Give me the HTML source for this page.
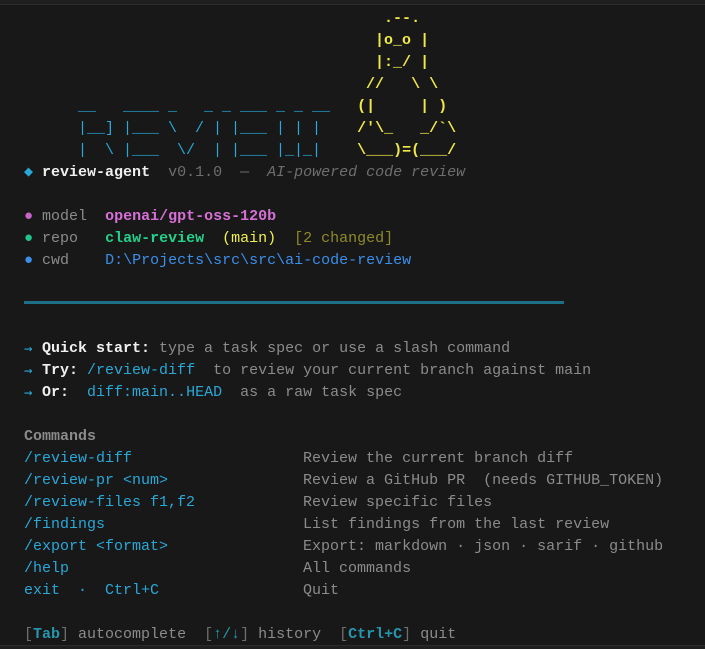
<!DOCTYPE html>
<html><head><meta charset="utf-8"><style>
html,body{margin:0;padding:0;background:#181818;width:705px;height:649px;overflow:hidden}
body{position:relative;font-family:"Liberation Mono","DejaVu Sans Mono",monospace;font-size:15px;color:#cccccc}
.top{position:absolute;left:0;top:0;width:705px;height:4px;background:#1f1f1f;border-bottom:1px solid #2b2b2b}
.bot{position:absolute;left:0;top:645px;width:705px;height:4px;background:#1f1f1f;border-top:1px solid #2b2b2b}
.l{position:absolute;left:24px;height:22px;line-height:22px;white-space:pre}
.y{color:#f0e84a}.c{color:#29a8d8}.g{color:#8b8b8b}.d{color:#6e6e6e}
.b{font-weight:bold}
.a{color:#29a8d8;font-family:"DejaVu Sans Mono",monospace;font-size:14px;display:inline-block;width:9px;line-height:22px;vertical-align:top}
.sep{position:absolute;left:24px;top:301px;width:540px;height:3px;background:#1d6f85}
</style></head><body>
<div class="top"></div>
<div class="l y b" style="top:8px">                                        .--.</div>
<div class="l y b" style="top:30px">                                       |o_o |</div>
<div class="l y b" style="top:52px">                                       |:_/ |</div>
<div class="l y b" style="top:74px">                                      //   \ \</div>
<div class="l" style="top:96px"><span class="c">      __   ____ _   _ _ ___ _ _ __</span><span class="y b">   (|     | )</span></div>
<div class="l" style="top:118px"><span class="c">      |__] |___ \  / | |___ | | |</span><span class="y b">    /'\_   _/`\</span></div>
<div class="l" style="top:140px"><span class="c">      |  \ |___  \/  | |___ |_|_|</span><span class="y b">    \___)=(___/</span></div>
<div class="l" style="top:162px"><span class="c">◆</span> <span class="b" style="color:#f0f0f0">review-agent</span>  <span class="d">v0.1.0  —  <i>AI-powered code review</i></span></div>
<div class="l" style="top:206px"><span style="color:#c864c8">●</span> <span class="g">model</span>  <span class="b" style="color:#d670d6">openai/gpt-oss-120b</span></div>
<div class="l" style="top:228px"><span style="color:#23c48b">●</span> <span class="g">repo</span>   <span class="b" style="color:#23d18b">claw-review</span>  <span style="color:#f0f050">(main)</span>  <span style="color:#8f8a28">[2 changed]</span></div>
<div class="l" style="top:250px"><span style="color:#3b8eea">●</span> <span class="g">cwd</span>    <span style="color:#3b8eea">D:\Projects\src\src\ai-code-review</span></div>
<div class="sep"></div>
<div class="l g" style="top:338px"><span class="a">→</span> <span class="b" style="color:#f0f0f0">Quick start:</span> type a task spec or use a slash command</div>
<div class="l g" style="top:360px"><span class="a">→</span> <span class="b" style="color:#f0f0f0">Try:</span> <span class="c">/review-diff</span>  to review your current branch against main</div>
<div class="l g" style="top:382px"><span class="a">→</span> <span class="b" style="color:#f0f0f0">Or:</span>  <span class="c">diff:main..HEAD</span>  as a raw task spec</div>
<div class="l b g" style="top:426px">Commands</div>
<div class="l g" style="top:448px"><span class="c">/review-diff                   </span>Review the current branch diff</div>
<div class="l g" style="top:470px"><span class="c">/review-pr &lt;num&gt;               </span>Review a GitHub PR  (needs GITHUB_TOKEN)</div>
<div class="l g" style="top:492px"><span class="c">/review-files f1,f2            </span>Review specific files</div>
<div class="l g" style="top:514px"><span class="c">/findings                      </span>List findings from the last review</div>
<div class="l g" style="top:536px"><span class="c">/export &lt;format&gt;               </span>Export: markdown · json · sarif · github</div>
<div class="l g" style="top:558px"><span class="c">/help                          </span>All commands</div>
<div class="l g" style="top:580px"><span class="c">exit  ·  Ctrl+C                </span>Quit</div>
<div class="l g" style="top:624px"><span class="d">[</span><b style="color:#2596ad">Tab</b><span class="d">]</span> autocomplete  <span class="d">[</span><span style="color:#2596ad">↑/↓</span><span class="d">]</span> history  <span class="d">[</span><b style="color:#2596ad">Ctrl+C</b><span class="d">]</span> quit</div>
<div class="bot"></div>
</body></html>
